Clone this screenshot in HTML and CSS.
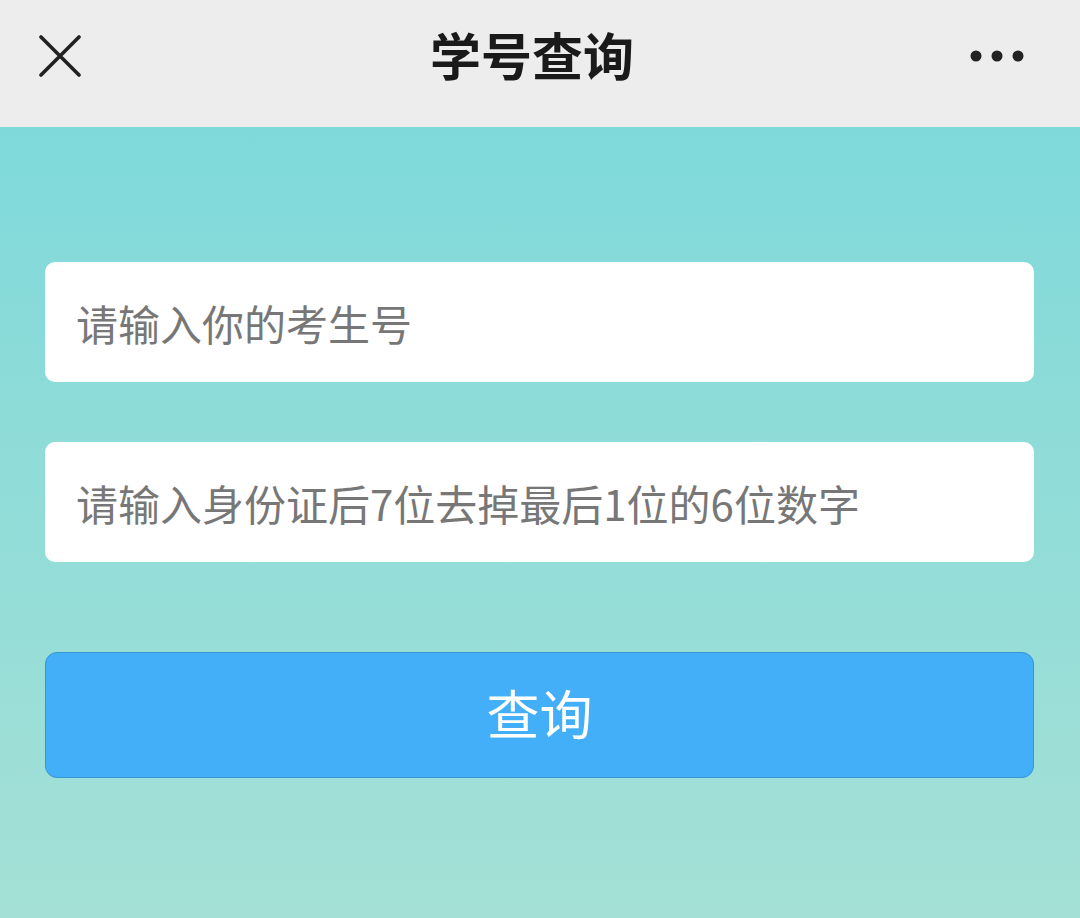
FILE: index.html
```html
<!DOCTYPE html>
<html lang="zh-CN">
<head>
    <meta charset="UTF-8">
    <meta name="viewport" content="width=device-width, initial-scale=1.0">
    <title>学号查询</title>
    <link rel="stylesheet" href="styles.css">
</head>
<body>

    <!-- Top Bar -->
    <div class="top-bar">
        <button class="icon-btn close-btn" aria-label="关闭">
            <svg width="42" height="42" viewBox="0 0 42 42">
                <path d="M2 2 L40 40 M40 2 L2 40" stroke="#222" stroke-width="3.6" stroke-linecap="round" fill="none"/>
            </svg>
        </button>
        <div class="top-title">学号查询</div>
        <button class="icon-btn more-btn" aria-label="更多">
            <svg width="56" height="14" viewBox="0 0 56 14">
                <circle cx="7" cy="7" r="5.5" fill="#222"/>
                <circle cx="28" cy="7" r="5.5" fill="#222"/>
                <circle cx="49" cy="7" r="5.5" fill="#222"/>
            </svg>
        </button>
    </div>

    <!-- Query Form -->
    <div class="query-container">
        <input type="text" class="query-input" placeholder="请输入你的考生号">
        <input type="text" class="query-input" placeholder="请输入身份证后7位去掉最后1位的6位数字">
        <button class="query-btn">查询</button>
    </div>

</body>
</html>
```

FILE: styles.css
```css
/* General Styling */
html, body {
    height: 100%;
}

body {
    margin: 0;
    font-family: "Noto Sans CJK SC", "Noto Sans", sans-serif;
    background: linear-gradient(to bottom, #7fd9da 127px, #8fdcd8 50%, #a4e0d6 100%);
    display: flex;
    flex-direction: column;
}

/* Top Bar */
.top-bar {
    height: 127px;
    box-sizing: border-box;
    padding: 0 55px 16px 39px;
    background: #ededed;
    display: grid;
    grid-template-columns: 1fr auto 1fr;
    align-items: center;
}

.icon-btn {
    background: none;
    border: none;
    padding: 0;
    display: flex;
    cursor: pointer;
}

.more-btn {
    justify-self: end;
}

.top-title {
    font-size: 51px;
    font-weight: 700;
    color: #1a1a1a;
    padding-bottom: 4px;
}

/* Query Form */
.query-container {
    padding: 135px 46px 0 45px;
    display: flex;
    flex-direction: column;
}

.query-input {
    height: 120px;
    box-sizing: border-box;
    margin-bottom: 60px;
    padding: 0 31px;
    border: none;
    border-radius: 10px;
    background: #ffffff;
    font-family: inherit;
    font-size: 42px;
    color: #333;
    outline: none;
}

.query-input::placeholder {
    color: #777777;
}

.query-btn {
    height: 126px;
    margin-top: 30px;
    padding-bottom: 8px;
    background: #42aff8;
    border: 1.5px solid #3895d4;
    border-radius: 12px;
    color: #ffffff;
    font-family: inherit;
    font-size: 53px;
    cursor: pointer;
}

.query-btn:hover {
    background: #2f9ff0;
}
```
